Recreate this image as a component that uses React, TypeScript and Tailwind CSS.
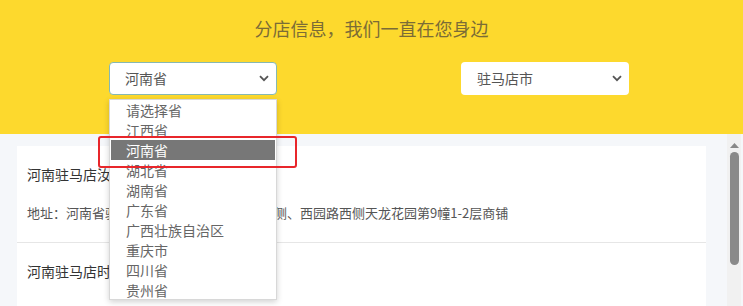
import React from "react";

const provinces = [
  "请选择省",
  "江西省",
  "河南省",
  "湖北省",
  "湖南省",
  "广东省",
  "广西壮族自治区",
  "重庆市",
  "四川省",
  "贵州省",
];

function Chevron() {
  return (
    <svg width="10" height="7" viewBox="0 0 10 7" className="shrink-0">
      <path d="M1 1.2 L5 5.2 L9 1.2" fill="none" stroke="#555" strokeWidth="1.8" />
    </svg>
  );
}

export default function App() {
  const font = { fontFamily: '"Noto Sans CJK SC", "Microsoft YaHei", sans-serif' };
  return (
    <div
      className="relative w-[743px] h-[306px] overflow-hidden bg-[#f5f7fa]"
      style={font}
    >
      {/* header */}
      <div className="h-[134px] bg-[#fdd92d] flex flex-col">
        <div className="pt-[14px] text-center text-[18px] leading-[28px] text-[#7b6c36]">
          分店信息，我们一直在您身边
        </div>
        <div className="mt-[20px] flex pl-[109px] gap-[184px]">
          <div className="w-[168px] h-[33px] bg-white rounded-[4px] border border-[#86b8b2] flex items-center justify-between pl-[15px] pr-[7px] text-[14px] text-[#555]">
            <span>河南省</span>
            <Chevron />
          </div>
          <div className="w-[168px] h-[33px] bg-white rounded-[4px] flex items-center justify-between pl-[16px] pr-[7px] text-[14px] text-[#555]">
            <span>驻马店市</span>
            <Chevron />
          </div>
        </div>
      </div>

      {/* content */}
      <div className="flex h-[172px]">
        <div className="flex-1 pl-[17px] pt-[12px]">
          <div className="w-[689px] bg-white">
            <div className="h-[97px] border-b border-[#e6e6e6] px-[10px] pt-[17px]">
              <div className="text-[14px] leading-[22px] text-[#333]">河南驻马店汝南店</div>
              <div className="mt-[18px] text-[13px] leading-[20px] text-[#555] whitespace-nowrap">
                地址：河南省驻马店市汝南县汝宁大道路南侧、西园路西侧天龙花园第9幢1-2层商铺
              </div>
            </div>
            <div className="h-[70px] px-[10px] pt-[17px]">
              <div className="text-[14px] leading-[22px] text-[#333]">河南驻马店时代店</div>
            </div>
          </div>
        </div>
        <div className="w-[37px] flex justify-end pr-[2px]">
          <div className="w-[14px] bg-[#f1f1f1] flex flex-col items-center pt-[9px]">
            <svg width="9" height="5" viewBox="0 0 9 5">
              <path d="M0 5 L4.5 0 L9 5 Z" fill="#888" />
            </svg>
            <div className="mt-[4px] w-[9px] h-[113px] rounded-full bg-[#8a8a8a]" />
          </div>
        </div>
      </div>

      {/* dropdown overlay */}
      <div className="absolute left-[109px] top-[99px] w-[168px] h-[201px] bg-white border border-[#d8d8d8] shadow-[0_2px_6px_rgba(0,0,0,0.18)]">
        {provinces.map((p, i) => (
          <div
            key={p}
            className={
              i === 2
                ? "h-[20px] leading-[20px] mx-[1px] pl-[15px] text-[14px] bg-[#777] text-white"
                : "h-[20px] leading-[20px] mx-[1px] pl-[15px] text-[14px] text-[#666]"
            }
          >
            {p}
          </div>
        ))}
      </div>

      {/* annotation */}
      <div className="absolute left-[98px] top-[136px] w-[199px] h-[32px] border-2 border-[#e8262b] rounded-[3px]" />
    </div>
  );
}
